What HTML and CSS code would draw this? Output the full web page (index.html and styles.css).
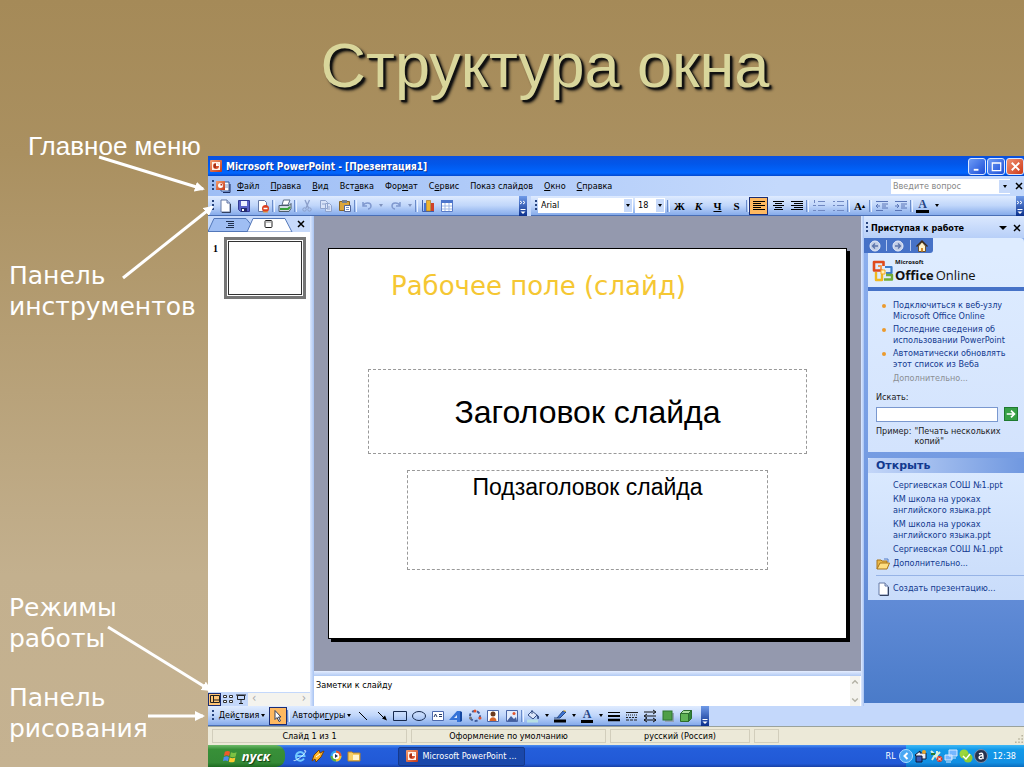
FILE: index.html
```html
<!DOCTYPE html>
<html lang="ru">
<head>
<meta charset="utf-8">
<title>Структура окна</title>
<link rel="stylesheet" href="styles.css">
</head>
<body>
<svg class="defs" aria-hidden="true">
  <defs>
    <marker id="head" viewBox="0 0 10 10" refX="8" refY="5" markerWidth="10" markerHeight="10" markerUnits="userSpaceOnUse" orient="auto"><path d="M0 0L10 5L0 10z" fill="#fff"/></marker>
    <linearGradient id="orange" x1="0" y1="0" x2="1" y2="1"><stop offset="0" stop-color="#f6a070"/><stop offset="1" stop-color="#c4391a"/></linearGradient>
    <symbol id="ppt" viewBox="0 0 12 12"><rect width="12" height="12" rx="1" fill="url(#orange)"/><rect x="2" y="2" width="8" height="8" fill="#fff4ea"/><circle cx="6" cy="6" r="3" fill="#d9512c"/><path d="M6 6V3A3 3 0 0 1 9 6z" fill="#fff"/><path d="M5 4v4" stroke="#6e1608"/></symbol>
    <symbol id="page" viewBox="0 0 14 14"><path d="M3 1h6l3 3v9H3z" fill="#fff" stroke="#6578a4"/><path d="M9 1v3h3" fill="#cbd8f2" stroke="#6578a4"/><path d="M12.500 5v8.500H4" fill="none" stroke="#33415f"/></symbol>
  </defs>
</svg>
<main class="slide">
  <h1 class="slide-title">Структура окна</h1>
  <div class="notes">
    <p class="note note-menu">Главное меню</p>
    <p class="note note-tools">Панель<br>инструментов</p>
    <p class="note note-modes">Режимы<br>работы</p>
    <p class="note note-draw">Панель<br>рисования</p>
  </div>
  <section class="app">
    <header class="titlebar">
      <svg width="12" height="12"><use href="#ppt"/></svg>
      <h2>Microsoft PowerPoint - [Презентация1]</h2>
      <button class="win" aria-label="Свернуть"><svg viewBox="0 0 16 16"><path d="M4 11.500h5" stroke="#fff" stroke-width="2"/></svg></button>
      <button class="win" aria-label="Развернуть"><svg viewBox="0 0 16 16"><path d="M3.500 4v8.500h9V4z M3 4.500h10" fill="none" stroke="#fff" stroke-width="1.300"/></svg></button>
      <button class="win win-close" aria-label="Закрыть"><svg viewBox="0 0 16 16"><path d="M4 4l8 8M12 4l-8 8" stroke="#fff" stroke-width="2"/></svg></button>
    </header>

    <nav class="menubar">
      <i class="grip"></i>
      <svg class="docicon" viewBox="0 0 16 13"><path d="M6 2h8v9H6z" fill="#fff" stroke="#34508f"/><path d="M15 4v8.500H8" fill="none" stroke="#1b2b5c"/><path d="M10 5h3M10 7h3" stroke="#7e96c6"/><rect x="1" y="1" width="9" height="9" fill="url(#orange)"/><circle cx="5.500" cy="5.500" r="2.500" fill="#fff"/><path d="M5.500 5.500V3.500A2 2 0 0 1 7.500 5.500z" fill="#bf2c13"/></svg>
      <button><u>Ф</u>айл</button><button><u>П</u>равка</button><button><u>В</u>ид</button><button>Вст<u>а</u>вка</button><button>Фор<u>м</u>ат</button><button>С<u>е</u>рвис</button><button>Показ слай<u>д</u>ов</button><button><u>О</u>кно</button><button><u>С</u>правка</button>
      <span class="ask"><input type="text" aria-label="Вопрос" placeholder="Введите вопрос"><button aria-label="Список вопросов"><i class="tri"></i></button></span>
      <button class="x" aria-label="Закрыть документ"><svg viewBox="0 0 8 8"><path d="M1 1l6 6M7 1l-6 6" stroke="#000" stroke-width="1.500"/></svg></button>
    </nav>

    <div class="toolbars">
      <div class="toolbar standard">
        <i class="grip"></i>
        <button class="tool" aria-label="Создать"><svg><use href="#page"/></svg></button>
        <button class="tool" aria-label="Сохранить"><svg viewBox="0 0 14 14"><path d="M1.500 1.500h11v11h-9l-2-2z" fill="#5a62c8" stroke="#313a94"/><path d="M4 2h6v5H4z" fill="#eef1ff"/><path d="M4 9h6v4H4z" fill="#242a6d"/><path d="M5 10h2v2H5z" fill="#fff"/></svg></button>
        <button class="tool" aria-label="Разрешения"><svg viewBox="0 0 14 14"><path d="M2.500 1.500h6l2 2v9h-8z" fill="#fff" stroke="#6578a4"/><circle cx="9.500" cy="9.500" r="3.500" fill="#dc3f20"/><path d="M7.500 9.500h4" stroke="#fff" stroke-width="1.500"/><path d="M7 13h5" stroke="#e7a23a"/></svg></button>
        <i class="sep"></i>
        <button class="tool" aria-label="Печать"><svg viewBox="0 0 14 14"><path d="M4 6l1.500-5H12l-2 5z" fill="#fff" stroke="#5b6d86"/><path d="M1 6.500h10l2-2v5l-2 3H1z" fill="#d2dae3" stroke="#4c5b6c"/><path d="M2 10h8l2-2" fill="none" stroke="#38a13b" stroke-width="2"/></svg></button>
        <i class="sep"></i>
        <button class="tool" aria-label="Вырезать"><svg viewBox="0 0 14 14"><path d="M5 1l3.500 8M9.500 1L6 9" fill="none" stroke="#8b9fca" stroke-width="1.300"/><circle cx="4.500" cy="10.500" r="1.700" fill="none" stroke="#8b9fca"/><circle cx="9.500" cy="10.500" r="1.700" fill="none" stroke="#8b9fca"/></svg></button>
        <button class="tool" aria-label="Копировать"><svg viewBox="0 0 14 14" fill="#d7e2f8" stroke="#8fa3cd"><path d="M1.500 1.500h5l2 2v6h-7zM6.500 4.500h4l2 2v6h-6z"/><path d="M3 5h3M8 8h3M8 10h3"/></svg></button>
        <button class="tool" aria-label="Вставить"><svg viewBox="0 0 14 14"><path d="M1.500 2.500h10v9h-10z" fill="#dba53a" stroke="#8a641f"/><path d="M4 1h5v3H4z" fill="#76808f"/><path d="M6.500 6.500h6v6h-6z" fill="#fff" stroke="#50649a"/><path d="M8 8.500h3M8 10.500h3" stroke="#7790c5"/></svg></button>
        <i class="sep"></i>
        <button class="tool" aria-label="Отменить"><svg viewBox="0 0 14 14"><path d="M3 3v4h4M3 6.500C5 3 11 3 11 7c0 2-2 3-3 3" fill="none" stroke="#8099cf" stroke-width="1.500"/></svg></button>
        <button class="dd" aria-label="Список отмены"><i class="tri pale"></i></button>
        <button class="tool" aria-label="Вернуть"><svg viewBox="0 0 14 14"><path d="M11 3v4H7M11 6.500C9 3 3 3 3 7c0 2 2 3 3 3" fill="none" stroke="#8099cf" stroke-width="1.500"/></svg></button>
        <button class="dd" aria-label="Список возврата"><i class="tri pale"></i></button>
        <i class="sep"></i>
        <button class="tool" aria-label="Диаграмма"><svg viewBox="0 0 14 14"><path d="M1.500 1v11.500H13" fill="none" stroke="#3e5fae"/><path d="M3 4h2v8H3z" fill="#4874d4"/><path d="M5.500 1.500h4V12h-4z" fill="#efb52f" stroke="#a56d12" stroke-width=".6"/><path d="M10 4h3v8h-3z" fill="#cf4128"/></svg></button>
        <button class="tool" aria-label="Таблица"><svg viewBox="0 0 14 14"><path d="M1.500 1.500h11v11h-11z" fill="#fff" stroke="#587bc8"/><path d="M1 1h12v3H1z" fill="#4c75cc"/><path d="M5 4v8M9 4v8M2 7h10M2 10h10" stroke="#9eb7e6"/></svg></button>
        <button class="more" aria-label="Параметры панели"><svg viewBox="0 0 8 20"><path d="M1 5l2 1.500L1 8M4 5l2 1.500L4 8" fill="none" stroke="#fff"/><path d="M1.500 13.500h5" stroke="#fff"/><path d="M1.500 15.500h5L4 18z" fill="#fff"/></svg></button>
      </div>
      <div class="toolbar format">
        <i class="grip"></i>
        <span class="pick pick-font"><select aria-label="Шрифт"><option>Arial</option></select><i class="arrow-box"><i class="tri"></i></i></span>
        <span class="pick pick-size"><select aria-label="Размер"><option>18</option></select><i class="arrow-box"><i class="tri"></i></i></span>
        <i class="sep"></i>
        <button class="tool letter">Ж</button><button class="tool letter"><em>К</em></button><button class="tool letter"><u>Ч</u></button><button class="tool letter">S</button>
        <i class="sep"></i>
        <button class="tool active" aria-label="По левому краю"><svg viewBox="0 0 14 14" stroke="#000"><path d="M1 2.500h12M1 4.500h8M1 6.500h12M1 8.500h8M1 10.500h12"/></svg></button>
        <button class="tool" aria-label="По центру"><svg viewBox="0 0 14 14" stroke="#000"><path d="M2 2.500h11M4 4.500h7M2 6.500h11M4 8.500h7M3 10.500h9"/></svg></button>
        <button class="tool" aria-label="По правому краю"><svg viewBox="0 0 14 14" stroke="#000"><path d="M1 2.500h12M4 4.500h9M1 6.500h12M4 8.500h9M1 10.500h12"/></svg></button>
        <i class="sep"></i>
        <button class="tool" aria-label="Нумерация"><svg viewBox="0 0 14 14" stroke="#7189c2"><path d="M2.500 1v3M1 6.500h3M1 11.500h3M6 2.500h7M6 6.500h7M6 11.500h7"/></svg></button>
        <button class="tool" aria-label="Маркеры"><svg viewBox="0 0 14 14" stroke="#7189c2"><path d="M2 2.500h2M2 6.500h2M2 11.500h2M6 2.500h7M6 6.500h7M6 11.500h7"/></svg></button>
        <i class="sep"></i>
        <button class="tool letter" aria-label="Увеличить шрифт">A<sup>▴</sup></button>
        <i class="sep"></i>
        <button class="tool" aria-label="Уменьшить отступ"><svg viewBox="0 0 14 14" stroke="#5a75b6"><path d="M1 2.500h12M7 5h6M7 7h4M7 9h6M1 11.500h7M5 7H1l2-2M1 7l2 2" fill="none"/></svg></button>
        <button class="tool" aria-label="Увеличить отступ"><svg viewBox="0 0 14 14" stroke="#5a75b6"><path d="M1 2.500h12M7 5h6M7 7h4M7 9h6M1 11.500h7M1 7h4L3 5M5 7L3 9" fill="none"/></svg></button>
        <i class="sep"></i>
        <button class="tool letter inked" aria-label="Цвет шрифта">A</button>
        <button class="dd" aria-label="Выбор цвета"><i class="tri"></i></button>
        <button class="more" aria-label="Параметры панели"><svg viewBox="0 0 8 20"><path d="M1 5l2 1.500L1 8M4 5l2 1.500L4 8" fill="none" stroke="#fff"/><path d="M1.500 13.500h5" stroke="#fff"/><path d="M1.500 15.500h5L4 18z" fill="#fff"/></svg></button>
      </div>
    </div>

    <div class="work">
      <aside class="outline">
        <div class="tabs">
          <svg viewBox="0 0 102 16" aria-hidden="true"><rect width="102" height="16" fill="#c7dafb"/><path d="M0 15.500L6 2.500h32l5 6-3 7z" fill="#9fbef3" stroke="#5277b9"/><path d="M39 16L45 2.500h32L84 16z" fill="#fff" stroke="#5277b9"/><path d="M18 5.500h8M20 7.500h6M20 9.500h6M18 11.500h8" stroke="#20304e"/><rect x="57" y="4.500" width="7" height="7" rx="1" fill="#fff" stroke="#222"/><path d="M58 6h5" stroke="#888"/><path d="M90 5l6 6M96 5l-6 6" stroke="#000" stroke-width="1.500"/></svg>
        </div>
        <div class="thumb-row"><b>1</b><div class="thumb"></div></div>
        <div class="views">
          <button class="view active" aria-label="Обычный"><svg viewBox="0 0 12 12"><path d="M1.500 2.500h9v7h-9zM4.500 2.500v7M5 7h5" fill="none" stroke="#222"/></svg></button>
          <button class="view" aria-label="Сортировщик"><svg viewBox="0 0 12 12"><path d="M1.500 2.500h3v2h-3zM7.500 2.500h3v2h-3zM1.500 7.500h3v2h-3zM7.500 7.500h3v2h-3z" fill="#fff" stroke="#333"/></svg></button>
          <button class="view" aria-label="Показ"><svg viewBox="0 0 12 12"><path d="M1 2h10M2.500 2.500h7v4h-7zM6 7v3M4 10.500h4" fill="none" stroke="#222"/></svg></button>
          <div class="hscroll"><span>‹</span><span>›</span></div>
        </div>
      </aside>
      <div class="split"></div>
      <div class="center">
        <div class="stage">
          <div class="page">
            <p class="caption">Рабочее поле (слайд)</p>
            <div class="ph ph-title">Заголовок слайда</div>
            <div class="ph ph-sub">Подзаголовок слайда</div>
          </div>
        </div>
        <div class="hsplit"></div>
        <div class="speaker"><p>Заметки к слайду</p><div class="vscroll"><svg viewBox="0 0 10 14"><path d="M2 8l3-3 3 3" fill="none" stroke="#b3b1a4" stroke-width="1.500"/></svg><svg viewBox="0 0 10 14"><path d="M2 6l3 3 3-3" fill="none" stroke="#b3b1a4" stroke-width="1.500"/></svg></div></div>
      </div>
      <div class="split"></div>
      <aside class="pane">
        <div class="pane-head"><i class="grip"></i><h3>Приступая к работе</h3><i class="tri big"></i><button class="x" aria-label="Закрыть область"><svg viewBox="0 0 8 8"><path d="M1 1l6 6M7 1l-6 6" stroke="#000" stroke-width="1.500"/></svg></button></div>
        <div class="pane-strip"><div class="pane-nav">
          <button aria-label="Назад"><svg viewBox="0 0 12 12"><circle cx="6" cy="6" r="5" fill="#c2cee6" stroke="#e9effb"/><path d="M9 6H4M6 3.500L3.500 6 6 8.500" fill="none" stroke="#5a73aa" stroke-width="1.300"/></svg></button>
          <button aria-label="Вперед"><svg viewBox="0 0 12 12"><circle cx="6" cy="6" r="5" fill="#c2cee6" stroke="#e9effb"/><path d="M3 6h5M6 3.500L8.500 6 6 8.500" fill="none" stroke="#5a73aa" stroke-width="1.300"/></svg></button>
          <button aria-label="Домой"><svg viewBox="0 0 12 12"><path d="M2.500 6v5.500h7V6L6 2z" fill="#fff3c9" stroke="#6d5330"/><path d="M.5 6.500L6 1l5.500 5.500" fill="none" stroke="#3b2b1b" stroke-width="1.300"/><path d="M5 8h2v3.500H5z" fill="#d38a2a"/></svg></button>
        </div></div>
        <div class="pane-body">
          <section class="box online">
            <div class="brand">
              <svg viewBox="0 0 22 22" fill="none" stroke-linejoin="round"><path d="M10.500 10.500H2V2h9.500v4" stroke="#df4a1d" stroke-width="2.600"/><path d="M6 6h3v3" stroke="#f29a52" stroke-width="2"/><path d="M13 7h6.500v6H14" stroke="#3d7ccb" stroke-width="2.200"/><path d="M4 12v8h6v-6" stroke="#f0b81f" stroke-width="2.400"/><path d="M12 19.500h8V15h-6" stroke="#73ad36" stroke-width="2.400"/><path d="M9 10h4v4H9z" fill="#fff2b8" stroke="#f6a81e"/></svg>
              <div class="brand-name"><small>Microsoft</small><span><b>Office</b> Online</span></div>
            </div>
            <ul class="links">
              <li><a href="#">Подключиться к веб-узлу Microsoft Office Online</a></li>
              <li><a href="#">Последние сведения об использовании PowerPoint</a></li>
              <li><a href="#">Автоматически обновлять этот список из Веба</a></li>
            </ul>
            <p class="dim">Дополнительно...</p>
            <label for="find">Искать:</label>
            <div class="find"><input id="find" type="text"><button aria-label="Найти"><svg viewBox="0 0 14 14"><path d="M2 7h9M7 3l4 4-4 4" fill="none" stroke="#fff" stroke-width="2"/></svg></button></div>
            <p class="hint"><span>Пример:</span><span>"Печать нескольких копий"</span></p>
          </section>
          <section class="box open">
            <h3>Открыть</h3>
            <div class="files">
              <a href="#">Сергиевская СОШ №1.ppt</a>
              <a href="#">КМ школа на уроках<br>английского языка.ppt</a>
              <a href="#">КМ школа на уроках<br>английского языка.ppt</a>
              <a href="#">Сергиевская СОШ №1.ppt</a>
              <a href="#" class="with-icon"><svg viewBox="0 0 14 14"><path d="M1 12V3h4l1 1h5v3" fill="#e9b94a" stroke="#a9751a"/><path d="M1 12l3-6h9.500L11 12z" fill="#ffdf82" stroke="#a9751a"/><path d="M8 2h4v3" fill="none" stroke="#527dc7"/></svg>Дополнительно...</a>
            </div>
            <div class="files create"><a href="#" class="with-icon"><svg><use href="#page"/></svg>Создать презентацию...</a></div>
          </section>
        </div>
      </aside>
    </div>

    <div class="toolbars drawbar">
      <div class="toolbar drawing">
        <i class="grip"></i>
        <button class="text-tool"><span>Дей<u>с</u>твия</span><i class="tri"></i></button>
        <button class="tool active" aria-label="Выбор объектов"><svg viewBox="0 0 14 14"><path d="M4 1.500v9l2-2 2 4 1.500-.700-2-3.800H10z" fill="#fff" stroke="#33415f"/></svg></button>
        <i class="sep"></i>
        <button class="text-tool"><span>Автофи<u>г</u>уры</span><i class="tri"></i></button>
        <div class="shapes">
          <button class="tool" aria-label="Линия"><svg viewBox="0 0 14 14"><path d="M3 3l8 8" stroke="#000"/></svg></button>
          <button class="tool" aria-label="Стрелка"><svg viewBox="0 0 14 14"><path d="M3 3l6 6" stroke="#000"/><path d="M12 11.500L10 6.500 7 9.500z"/></svg></button>
          <button class="tool" aria-label="Прямоугольник"><svg viewBox="0 0 14 14"><path d="M.5 2.500h13v9H.5z" fill="none" stroke="#16294d"/></svg></button>
          <button class="tool" aria-label="Овал"><svg viewBox="0 0 14 14"><ellipse cx="7" cy="7" rx="6.500" ry="4.500" fill="none" stroke="#16294d"/></svg></button>
          <button class="tool" aria-label="Надпись"><svg viewBox="0 0 14 14"><path d="M1.500 2.500h11v9h-11z" fill="#fff" stroke="#4c69ac"/><path d="M3 8l1.500-3L6 8M8 5.500h3M8 7.500h3" fill="none" stroke="#233968"/></svg></button>
          <button class="tool" aria-label="WordArt"><svg viewBox="0 0 14 14"><path d="M0 11l8-9h3v11H8v-2z" fill="#3673d7"/><path d="M11 2l2 1v9l-2 1z" fill="#15479f"/><path d="M5 9l3-3v3z" fill="#dce9ff"/></svg></button>
          <button class="tool" aria-label="Схема"><svg viewBox="0 0 14 14" fill="none"><circle cx="7" cy="7" r="5" stroke="#3d5b9b" stroke-width="2" stroke-dasharray="3 2"/><circle cx="7" cy="2" r="1.500" fill="#e1532b"/><circle cx="12" cy="9" r="1.500" fill="#e1532b"/><circle cx="2.500" cy="9" r="1.500" fill="#777"/></svg></button>
          <button class="tool" aria-label="Картинка"><svg viewBox="0 0 14 14"><path d="M1.500 1.500h11v11h-11z" fill="#fff" stroke="#4965a6"/><circle cx="7" cy="5" r="2.500" fill="#6b3a20"/><path d="M3.500 12c0-5 7-5 7 0z" fill="#d9652b"/></svg></button>
          <button class="tool" aria-label="Рисунок"><svg viewBox="0 0 14 14"><path d="M1.500 1.500h11v11h-11z" fill="#e1ebfc" stroke="#4965a6"/><path d="M2 12l4-5 3 3 2-2 1 4z" fill="#445f9e"/><circle cx="9" cy="4.500" r="1.500" fill="#e1532b"/></svg></button>
        </div>
        <i class="sep"></i>
        <button class="tool" aria-label="Цвет заливки"><svg viewBox="0 0 14 14"><path d="M2 6l4-4 5 4-4 4z" fill="#dbe6f9" stroke="#354f85"/><path d="M6 5V1M11 6c2 1 2 3 1 4z" fill="#3f7be0" stroke="#354f85"/><path d="M1 12h11" stroke="#b7e0e3" stroke-width="3"/></svg></button>
        <button class="dd" aria-label="Варианты заливки"><i class="tri"></i></button>
        <button class="tool" aria-label="Цвет линий"><svg viewBox="0 0 14 14"><path d="M4 9l6-7 3 1-6 6z" fill="#3e74d5" stroke="#26477f"/><path d="M10 2l2-1 1 2" fill="#f0bb39"/><path d="M1 9h3" stroke="#26477f"/><path d="M1 12h12" stroke="#000" stroke-width="3"/></svg></button>
        <button class="dd" aria-label="Варианты линий"><i class="tri"></i></button>
        <button class="tool letter inked" aria-label="Цвет текста">A</button>
        <button class="dd" aria-label="Варианты текста"><i class="tri"></i></button>
        <button class="tool" aria-label="Тип линии"><svg viewBox="0 0 14 14" stroke="#000"><path d="M1 3.500h12"/><path d="M1 7h12" stroke-width="2"/><path d="M1 11h12" stroke-width="2.500"/></svg></button>
        <button class="tool" aria-label="Тип штриха"><svg viewBox="0 0 14 14" stroke="#222"><path d="M1 3.500h12"/><path d="M1 6h12" stroke-dasharray="1 1"/><path d="M1 8.500h12" stroke-dasharray="2 1"/><path d="M1 11h12" stroke-dasharray="3 1"/></svg></button>
        <button class="tool" aria-label="Тип стрелки"><svg viewBox="0 0 14 14" stroke="#111" fill="none"><path d="M1 3h11M10 1l3 2-3 2M13 7H2M4 5L1 7l3 2M1 11h12M4 9l-3 2 3 2M10 9l3 2-3 2"/></svg></button>
        <button class="tool" aria-label="Тень"><svg viewBox="0 0 14 14"><rect x="4" y="4" width="9" height="9" fill="#93a2b8"/><rect x="2" y="2" width="9" height="9" fill="#4f9f48" stroke="#2e7730"/></svg></button>
        <button class="tool" aria-label="Объем"><svg viewBox="0 0 14 14" stroke="#2c6d2e"><path d="M1.500 4.500h8v8h-8z" fill="#5fb355"/><path d="M1.500 4.500l3-3h8l-3 3z" fill="#a8dd9c"/><path d="M9.500 4.500l3-3v8l-3 3z" fill="#2f8436"/></svg></button>
        <button class="more" aria-label="Параметры панели"><svg viewBox="0 0 8 20"><path d="M1.500 13.500h5" stroke="#fff"/><path d="M1.500 15.500h5L4 18z" fill="#fff"/></svg></button>
      </div>
    </div>

    <div class="status"><span class="s1">Слайд 1 из 1</span><span class="s2">Оформление по умолчанию</span><span class="s3">русский (Россия)</span><span class="s4"></span><svg viewBox="0 0 10 10" fill="#b8b49f"><path d="M8 0h2v2H8zM8 4h2v2H8zM8 8h2v2H8zM4 4h2v2H4zM4 8h2v2H4zM0 8h2v2H0z"/></svg></div>

    <footer class="taskbar">
      <button class="start"><svg viewBox="0 0 16 16"><path d="M2 3c2-1 4-1 5.500 0L6.500 7.500C5 6.500 3 6.500 1 7.500z" fill="#ef5a2b"/><path d="M8.500 3.500c2 1 4 1 6 0L13.500 8c-2 1-4 1-6 0z" fill="#7cc243"/><path d="M.8 8.500c2-1 4-1 5.500 0L5.300 13c-2-1-4-1-5.300 0z" fill="#4a8df0"/><path d="M7.200 9c2 1 4 1 6 0l-1 4.500c-2 1-4 1-6 0z" fill="#fbc92e"/></svg>пуск</button>
      <div class="quick">
        <button aria-label="Internet Explorer"><svg viewBox="0 0 14 14" fill="none"><path d="M11 9.500A4.300 4.300 0 1 1 11.500 7H4" stroke="#71c8ff" stroke-width="2"/><path d="M1 11C0 13 6 10 10 6s3-5 1-4" stroke="#d4f0ff"/></svg></button>
        <button aria-label="Проигрыватель"><svg viewBox="0 0 14 14"><path d="M3 6l5-5 1 3 4-2-3 6-5 5-1-3-3 2z" fill="#ffb528" stroke="#73400c"/><path d="M5 8l4-3" stroke="#fff"/></svg></button>
        <button aria-label="Медиа"><svg viewBox="0 0 14 14"><circle cx="7" cy="7" r="5.500" fill="#33a3ee"/><path d="M7 7V1.500A5.500 5.500 0 0 1 12.500 7z" fill="#e7552b"/><path d="M7 7h5.500A5.500 5.500 0 0 1 7 12.500z" fill="#f9c52d"/><path d="M7 7v5.500A5.500 5.500 0 0 1 1.500 7z" fill="#59ae3f"/><circle cx="7" cy="7" r="3.300" fill="#fff"/><path d="M6 5l3 2-3 2z" fill="#203050"/></svg></button>
        <button aria-label="Папка"><svg viewBox="0 0 14 14"><path d="M1 12V3h4l1 1h7v8z" fill="#f6ce64" stroke="#b98426"/><path d="M6 6h6v5H6z" fill="#fff4cf"/></svg></button>
      </div>
      <button class="task"><svg viewBox="0 0 12 12"><use href="#ppt"/></svg>Microsoft PowerPoint ...</button>
      <span class="lang">RL</span>
      <div class="tray">
        <svg viewBox="0 0 14 14"><circle cx="7" cy="7" r="6.500" fill="#49a8f3" stroke="#a9d9ff"/><path d="M8.500 4L5.500 7l3 3" fill="none" stroke="#fff" stroke-width="2"/></svg>
        <svg viewBox="0 0 14 14"><path d="M1 6l5-4v2h6v6H7v2z" fill="#e9edf5" stroke="#101936"/><path d="M2 7h6v6H2z" fill="#3959b4" stroke="#101936"/><circle cx="10" cy="3" r="2" fill="#e7a42a"/></svg>
        <svg viewBox="0 0 14 14"><path d="M2 2l4 4-3 5M8 2v8M11 3L6 8" stroke="#d8f2e0" stroke-width="2" fill="none"/><path d="M2 5h4" stroke="#217b36" stroke-width="2"/><circle cx="10.500" cy="10" r="3" fill="#d83b28"/><path d="M9 8.500l3 3M12 8.500l-3 3" stroke="#fff"/></svg>
        <svg viewBox="0 0 14 14"><path d="M5 1h8v6H5zM1 6h7v5H1z" fill="#75b6ff" stroke="#dbe9ff"/><path d="M2 13h5M7 9h5" stroke="#dbe9ff"/></svg>
        <svg viewBox="0 0 14 14"><circle cx="5" cy="5" r="4.500" fill="#9bd63c"/><circle cx="9" cy="9" r="4.500" fill="#8dcc31"/><path d="M4 7l3 3 4-5" fill="none" stroke="#fff" stroke-width="1.500"/></svg>
        <svg viewBox="0 0 14 14"><circle cx="7" cy="7" r="6.500" fill="#26324d" stroke="#7d8fae"/><path d="M5 5c4-2 4 0 4 5M9 7C4 6 4 11 8 9.500" fill="none" stroke="#fff" stroke-width="1.500"/></svg>
        <time>12:38</time>
      </div>
    </footer>
  </section>
  <svg class="arrows" viewBox="0 0 216 767" width="216" height="767" stroke="#fff" stroke-width="3" aria-hidden="true">
    <path d="M99 157L203 189" marker-end="url(#head)"/>
    <path d="M123 278L212 207" marker-end="url(#head)"/>
    <path d="M108 627L210 690" marker-end="url(#head)"/>
    <path d="M148 716H203" marker-end="url(#head)"/>
  </svg>
</main>
</body>
</html>
```

FILE: styles.css
```css
* { box-sizing: border-box; }
body { margin: 0; }
h1, h2, h3, p, ul { margin: 0; padding: 0; }
button, input, select { font: inherit; color: inherit; padding: 0; margin: 0; border: 0; background: none; border-radius: 0; }
button { display: flex; align-items: center; justify-content: center; white-space: nowrap; }
a { color: inherit; text-decoration: none; }
svg { display: block; flex: none; }
.defs { position: absolute; width: 0; height: 0; }

.slide {
  position: relative;
  min-height: 100vh;
  display: grid;
  grid-template: 156px 1fr / 208px minmax(0, 1fr);
  background: linear-gradient(#a58a58, #aa9060 20%, #c3b08e 75%, #c5b291);
  overflow: hidden;
}
.slide-title {
  grid-column: 1 / -1;
  grid-row: 1;
  padding: 28px 0 0 66px;
  text-align: center;
  font: 63px/74px "Liberation Sans", Arial, sans-serif;
  color: #d9d69b;
  text-shadow: 2px 2px 1px #111, 3px 3px 3px #111;
}
.notes { grid-row: 1 / 3; grid-column: 1; padding: 131px 0 0 9px; color: #fff; }
.note { font: 25px/31px "DejaVu Sans", Verdana, sans-serif; white-space: nowrap; }
.note-menu { font: 26px/30px "Liberation Sans", Arial, sans-serif; padding-left: 19px; }
.note-tools { margin-top: 99px; }
.note-modes { margin-top: 270px; }
.note-draw { margin-top: 28px; }
.arrows { position: absolute; top: 0; left: 0; pointer-events: none; }

.app {
  grid-row: 2;
  grid-column: 2;
  display: grid;
  grid-template: 20px 20px 20px 1fr 20px 19px 22px / minmax(0, 1fr);
  font: 9px/11px "DejaVu Sans Condensed", "DejaVu Sans", Tahoma, sans-serif;
  color: #000;
  background: #c4d8fb;
}

.titlebar { display: flex; align-items: center; gap: 1px; padding-left: 2px; background: linear-gradient(#0a50dd, #0257ea 40%, #0066ff 85%, #0348ce); color: #fff; }
.titlebar h2 { flex: 1; font-size: 10px; padding-left: 3px; text-shadow: 1px 1px #0a2f90; }
.win { width: 18px; height: 17px; border: 1px solid #dce8ff; border-radius: 3px; background: linear-gradient(135deg, #6d9bf5, #1c4fd8); }
.win svg { width: 15px; height: 15px; }
.win-close { background: linear-gradient(135deg, #ef9273, #cf3917); }

.grip { flex: none; width: 2px; height: 12px; margin: 0 1px 0 4px; background: repeating-linear-gradient(#27447f 0 2px, transparent 2px 4px); }
.menubar { display: flex; align-items: center; gap: 11px; background: linear-gradient(90deg, #9ebef5, #c4d9fc 70%); }
.menubar .grip { margin-right: -10px; }
.docicon { width: 16px; height: 13px; margin-right: -5px; }
.ask { display: flex; align-items: center; margin-left: auto; width: 119px; height: 15px; background: #fff; color: #888; }
.ask input { flex: 1; min-width: 0; padding-left: 2px; }
.ask input::placeholder { color: #888; opacity: 1; }
.ask button { width: 11px; height: 13px; background: #c8dafa; }
.x svg { width: 8px; height: 8px; }
.menubar .x { margin: 0 1px 0 -6px; }

.tri { flex: none; width: 0; height: 0; border: 2px solid transparent; border-top: 3px solid #000; border-bottom: 0; }
.tri.pale { border-top-color: #7f93be; }
.tri.big { border-width: 4px 4px 0; }

.toolbars { display: flex; gap: 4px; background: #c4d8fb; }
.toolbar { display: flex; align-items: center; background: linear-gradient(#dfebff, #c0d6fa 50%, #86abeb); border-bottom: 1px solid #4a6fb5; }
.standard { width: 319px; }
.format { flex: 1; }
.tool { flex: none; width: 19px; height: 18px; }
.tool svg { width: 14px; height: 14px; }
.tool.active { background: #ffb960; border: 1px solid #1c2d72; }
.dd { flex: none; width: 10px; height: 18px; }
.sep { flex: none; width: 3px; height: 12px; border-left: 1px solid #6a8ccb; border-right: 1px solid #e8f1ff; }
.more { flex: none; width: 8px; height: 20px; margin-left: auto; background: linear-gradient(#6f9ae8, #0a2f8c); }
.more svg { width: 8px; height: 20px; }
.letter { font: bold 11px "Liberation Serif", "Times New Roman", serif; }
.letter sup { font-size: 6px; }
.letter.inked { font-size: 12px; line-height: 12px; color: #254484; height: 14px; width: 13px; margin: 0 3px; border-bottom: 3px solid #000; }
.pick { display: flex; align-items: center; height: 15px; background: #fff; margin-right: 2px; padding-right: 1px; }
.pick select { flex: 1; min-width: 0; appearance: none; padding-left: 3px; }
.arrow-box { display: flex; align-items: center; justify-content: center; width: 8px; height: 13px; background: #c8dafa; }
.pick-font { width: 95px; }
.pick-size { width: 30px; }

.work { display: grid; grid-template-columns: 102px 4px minmax(0, 1fr) 3px 160px; min-height: 0; }
.split { background: linear-gradient(90deg, #dfeaff, #a8c3f2); }
.outline { display: flex; flex-direction: column; background: #fff; }
.tabs svg { width: 102px; height: 16px; }
.thumb-row { display: flex; align-items: flex-start; gap: 6px; padding: 5px 4px 0 5px; font-family: "Liberation Serif", serif; font-size: 10px; }
.thumb-row b { padding-top: 6px; width: 5px; }
.thumb { flex: 1; height: 62px; border: 3px solid #777; outline: 1px solid #333; outline-offset: -5px; }
.views { display: flex; align-items: center; height: 14px; margin-top: auto; background: #c4d8fb; }
.view { width: 13px; height: 13px; }
.view svg { width: 12px; height: 12px; }
.view.active { background: #ffc576; border: 1px solid #1c2d72; }
.hscroll { display: flex; flex: 1; justify-content: space-between; height: 13px; margin-left: 1px; padding: 0 4px; background: #f4f3ee; color: #aaa; font-size: 12px; }

.center { display: grid; grid-template-rows: 1fr 5px 30px; }
.stage { display: flex; padding: 32px 14px 32px 14px; background: #9499ae; }
.page { flex: 1; background: #fff; border: 1px solid #000; box-shadow: 3px 3px #000; display: flex; flex-direction: column; align-items: center; font-family: "Liberation Sans", Arial, sans-serif; }
.caption { align-self: flex-start; padding: 21px 0 0 62px; font: 26px/32px "DejaVu Sans", Verdana, sans-serif; color: #f5c733; white-space: nowrap; }
.ph { border: 1px dashed #999; }
.ph-title { width: 85%; height: 85px; margin-top: 67px; display: flex; align-items: center; justify-content: center; font-size: 32px; line-height: 36px; }
.ph-sub { width: 70%; height: 100px; margin-top: 16px; padding-top: 3px; text-align: center; font-size: 23px; line-height: 26px; }
.hsplit { background: linear-gradient(#e5eeff, #b1c9f3); }
.speaker { display: flex; justify-content: space-between; background: #fff; padding-left: 2px; }
.speaker p { padding-top: 4px; }
.vscroll { display: flex; flex-direction: column; justify-content: space-between; margin-right: 1px; background: #f4f3ee; }
.vscroll svg { width: 10px; height: 13px; }

.pane { background: linear-gradient(#8fb2f0, #6a92dc 70%, #4a7bc9); margin-bottom: 3px; display: flex; flex-direction: column; }
.pane-head { display: flex; align-items: center; height: 22px; padding: 2px 3px 0 0; background: linear-gradient(#dbe8fe, #b7cff8); }
.pane-head .grip { margin-left: 2px; margin-right: 3px; }
.pane-head h3 { flex: 1; font-size: 9px; white-space: nowrap; }
.pane-head .x { margin-left: 6px; }
.pane-strip { background: #deecff; border-top-right-radius: 4px; }
.pane-nav { display: flex; align-items: center; width: 69px; height: 15px; background: #4672c7; border-bottom-right-radius: 3px; }
.pane-nav button { flex: 1; height: 11px; border-right: 1px solid #b5c9f1; }
.pane-nav button:last-child { border: 0; }
.pane-nav svg { width: 12px; height: 12px; }
.pane-body { padding-left: 4px; display: grid; gap: 6px; }
.box { background: linear-gradient(#dbeaff, #c9dcfa); color: #12398f; }
.online { background: linear-gradient(#deecff, #d3e3fd); height: 199px; }
.brand { display: flex; align-items: center; gap: 1px; height: 38px; padding: 2px 0 0 4px; border-bottom: 4px solid #4672c7; color: #111; }
.brand > svg { width: 22px; height: 22px; }
.brand-name { display: flex; flex-direction: column; font-family: "Open Sans", sans-serif; white-space: nowrap; }
.brand-name small { font-size: 6px; line-height: 8px; font-weight: bold; }
.brand-name span { font-size: 13px; line-height: 18px; display: flex; gap: 2px; }
.links { list-style: none; display: grid; gap: 2px; padding: 9px 0 0 25px; }
.links li { display: flex; padding-right: 16px; }
.links li::before { content: ""; flex: none; width: 4px; height: 4px; margin: 4px 7px 0 -11px; border-radius: 50%; background: #eb9a2e; }
.dim { padding: 3px 0 0 25px; color: #8b8f94; }
.online label { display: block; margin: 8px 0 4px 8px; color: #222; }
.find { display: flex; gap: 6px; margin-left: 8px; }
.find input { width: 122px; height: 15px; border: 1px solid #7a98cf; background: #fff; }
.find button { width: 14px; height: 14px; background: #37a046; border: 1px solid #1e7a30; }
.find svg { width: 12px; height: 12px; }
.hint { display: flex; gap: 3px; padding: 4px 20px 0 8px; color: #222; line-height: 10px; }
.open h3 { height: 15px; padding-left: 8px; font: bold 11px/15px "DejaVu Sans", sans-serif; color: #12398f; background: linear-gradient(90deg, #c3d6f8, #7098e0); border-top-left-radius: 3px; }
.files { display: grid; gap: 3px; padding: 7px 0 6px 25px; white-space: nowrap; }
.with-icon { display: flex; align-items: center; height: 11px; gap: 3px; margin-left: -17px; }
.with-icon svg { width: 14px; height: 14px; }
.create { margin: 0 0 0 8px; padding: 7px 0 6px 17px; border-top: 1px solid #96b3e6; }

.drawbar { gap: 0; }
.drawing { width: 501px; }
.drawing .tool { width: 18px; }
.drawing .letter.inked { width: 12px; }
.drawing .dd { width: 9px; }
.text-tool { flex: none; gap: 2px; width: 54px; }
.text-tool ~ .text-tool { width: 64px; }
.shapes { display: flex; justify-content: space-between; width: 167px; }

.status { display: flex; align-items: center; gap: 4px; padding: 2px 0 2px 4px; background: #ece9d8; border-top: 1px solid #9aa29c; }
.status span { height: 14px; border: 1px solid #d2cebc; text-align: center; line-height: 13px; }
.s1 { width: 195px; }
.s2 { width: 195px; }
.s3 { width: 140px; }
.s4 { width: 25px; }
.status svg { width: 8px; height: 8px; margin: 6px 1px 0 auto; }

.taskbar { display: flex; align-items: center; background: linear-gradient(#4b8ff2, #245edb 15%, #2159d6 85%, #1941a5); color: #fff; }
.start { width: 77px; height: 22px; gap: 4px; background: linear-gradient(#6dba69, #389038 20%, #348a36 80%, #1d6a21); border-radius: 0 9px 9px 0; font: italic bold 13px/20px "Open Sans", sans-serif; text-shadow: 1px 1px 1px #123c12; }
.start svg { width: 15px; height: 15px; }
.quick { display: flex; gap: 4px; margin-left: 8px; }
.quick svg { width: 14px; height: 14px; }
.task { width: 127px; height: 19px; gap: 4px; margin-left: 37px; background: #1a48ab; border: 1px solid #16398b; border-radius: 2px; }
.task svg { width: 12px; height: 12px; }
.lang { margin: 0 10px 0 auto; }
.tray { display: flex; align-items: center; gap: 1px; height: 22px; padding-right: 8px; background: linear-gradient(#3fb8f5, #139ae9 20%, #128fe2 80%, #0b6dbd); }
.tray svg { width: 14px; height: 14px; }
.tray svg:first-child { margin-left: -7px; }
.tray time { margin-left: 4px; }
```
